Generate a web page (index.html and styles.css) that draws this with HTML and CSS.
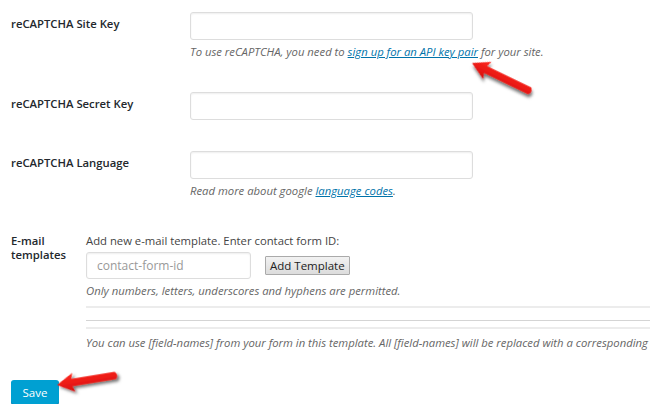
FILE: index.html
```html
<!DOCTYPE html>
<html lang="en">
<head>
  <meta charset="UTF-8">
  <title>reCAPTCHA settings</title>
  <link rel="stylesheet" href="styles.css">
</head>
<body>
  <form class="settings">
    <div class="field field-site">
      <label class="field-label">reCAPTCHA Site Key</label>
      <div class="field-body">
        <input type="text" class="text-input">
        <p class="description">To use reCAPTCHA, you need to <a href="#">sign up for an API key pair</a> for your site.</p>
      </div>
    </div>

    <div class="field field-secret">
      <label class="field-label">reCAPTCHA Secret Key</label>
      <div class="field-body">
        <input type="text" class="text-input">
      </div>
    </div>

    <div class="field field-lang">
      <label class="field-label">reCAPTCHA Language</label>
      <div class="field-body">
        <input type="text" class="text-input">
        <p class="description">Read more about google <a href="#">language codes</a>.</p>
      </div>
    </div>

    <div class="templates">
      <label class="templates-label">E-mail templates</label>
      <div class="templates-body">
        <p class="templates-intro">Add new e-mail template. Enter contact form ID:</p>
        <div class="templates-add">
          <input type="text" class="id-input" placeholder="contact-form-id">
          <button type="button" class="btn-secondary">Add Template</button>
        </div>
        <p class="description">Only numbers, letters, underscores and hyphens are permitted.</p>
        <div class="rule rule-top"></div>
        <div class="rule rule-bottom"></div>
        <p class="description nowrap">You can use [field-names] from your form in this template. All [field-names] will be replaced with a corresponding</p>
      </div>
    </div>

    <button type="button" class="btn-primary">Save</button>
  </form>

  <!-- annotation arrows drawn over the screenshot -->
  <svg class="arrows" width="650" height="419" viewBox="0 0 650 419">
    <defs>
      <filter id="shadow" x="-30%" y="-60%" width="160%" height="220%">
        <feDropShadow dx="2" dy="2.5" stdDeviation="1.6" flood-color="#000" flood-opacity="0.55"/>
      </filter>
      <linearGradient id="red" x1="0" y1="0" x2="0" y2="1">
        <stop offset="0" stop-color="#ff2a1f"/>
        <stop offset="1" stop-color="#d80d0d"/>
      </linearGradient>
    </defs>
    <g transform="translate(472 63) rotate(25.8)" filter="url(#shadow)">
      <path d="M0 0 L17 -9.5 L15 -3.8 L64 -3.8 Q67.8 0 64 3.8 L15 3.8 L17 9.5 Z" fill="url(#red)"/>
    </g>
    <g transform="translate(57 385) rotate(-9.3)" filter="url(#shadow)">
      <path d="M0 0 L17 -9.5 L15 -3.8 L59 -3.8 Q62.8 0 59 3.8 L15 3.8 L17 9.5 Z" fill="url(#red)"/>
    </g>
  </svg>
</body>
</html>
```

FILE: styles.css
```css
body {
  margin: 0;
  padding: 0 0 0 11px;
  background: #fff;
  font-family: "Open Sans", "Liberation Sans", sans-serif;
  font-size: 11.3px;
  color: #444;
  overflow: hidden;
}

p {
  margin: 0;
}

a {
  color: #0073aa;
}

.settings {
  padding-top: 12px;
}

.field {
  display: flex;
}

.field-label {
  width: 179px;
  flex-shrink: 0;
  padding-top: 3px;
  line-height: 18px;
  font-weight: 600;
  color: #23282d;
}

.field-body {
  display: flex;
  flex-direction: column;
}

.text-input,
.id-input {
  box-sizing: border-box;
  width: 283px;
  height: 28px;
  margin: 0;
  border: 1px solid #ddd;
  border-radius: 3px;
  box-shadow: inset 0 1px 2px rgba(0, 0, 0, 0.07);
  background: #fff;
  font-family: inherit;
  font-size: 12px;
}

.description {
  line-height: 18px;
  margin-top: 3px;
  font-style: italic;
  color: #666;
}

.field-secret {
  margin-top: 31px;
}

.field-lang {
  margin-top: 31px;
}

.templates {
  display: flex;
  margin-top: 34px;
}

.templates-label {
  width: 75px;
  flex-shrink: 0;
  line-height: 14px;
  font-weight: 600;
  color: #23282d;
}

.templates-body {
  flex: 1;
  min-width: 0;
}

.templates-intro {
  line-height: 18px;
  margin-top: -2px;
  color: #444;
}

.templates-add {
  display: flex;
  align-items: center;
  gap: 14px;
  margin-top: 2px;
}

.id-input {
  width: 165px;
  height: 27px;
  padding: 0 10px;
}

.id-input::placeholder {
  color: #999;
}

.btn-secondary {
  height: 19px;
  padding: 0 4px;
  border: 1px solid #aaa;
  border-radius: 1px;
  background: linear-gradient(#f2f2f2, #dcdcdc);
  font-family: inherit;
  font-size: 11.5px;
  color: #222;
  line-height: 16px;
}

.rule {
  margin-right: -1px;
}

.rule-top {
  margin-top: 6px;
  border-top: 2px solid #ececec;
}

.rule-bottom {
  margin-top: 12px;
  box-sizing: border-box;
  height: 9px;
  border-top: 1px solid #d4d4d4;
  border-bottom: 2px solid #ececec;
}

.nowrap {
  white-space: nowrap;
  overflow: hidden;
  margin-top: 5px;
}

.btn-primary {
  display: block;
  width: 48px;
  height: 24px;
  margin-top: 28px;
  padding: 0;
  border: 0;
  border-radius: 3px;
  background: #00a0d2;
  box-shadow: 0 1px 0 #0073aa;
  font-family: inherit;
  font-size: 11.5px;
  color: #fff;
}

.arrows {
  position: absolute;
  top: 0;
  left: 0;
  pointer-events: none;
}
```
